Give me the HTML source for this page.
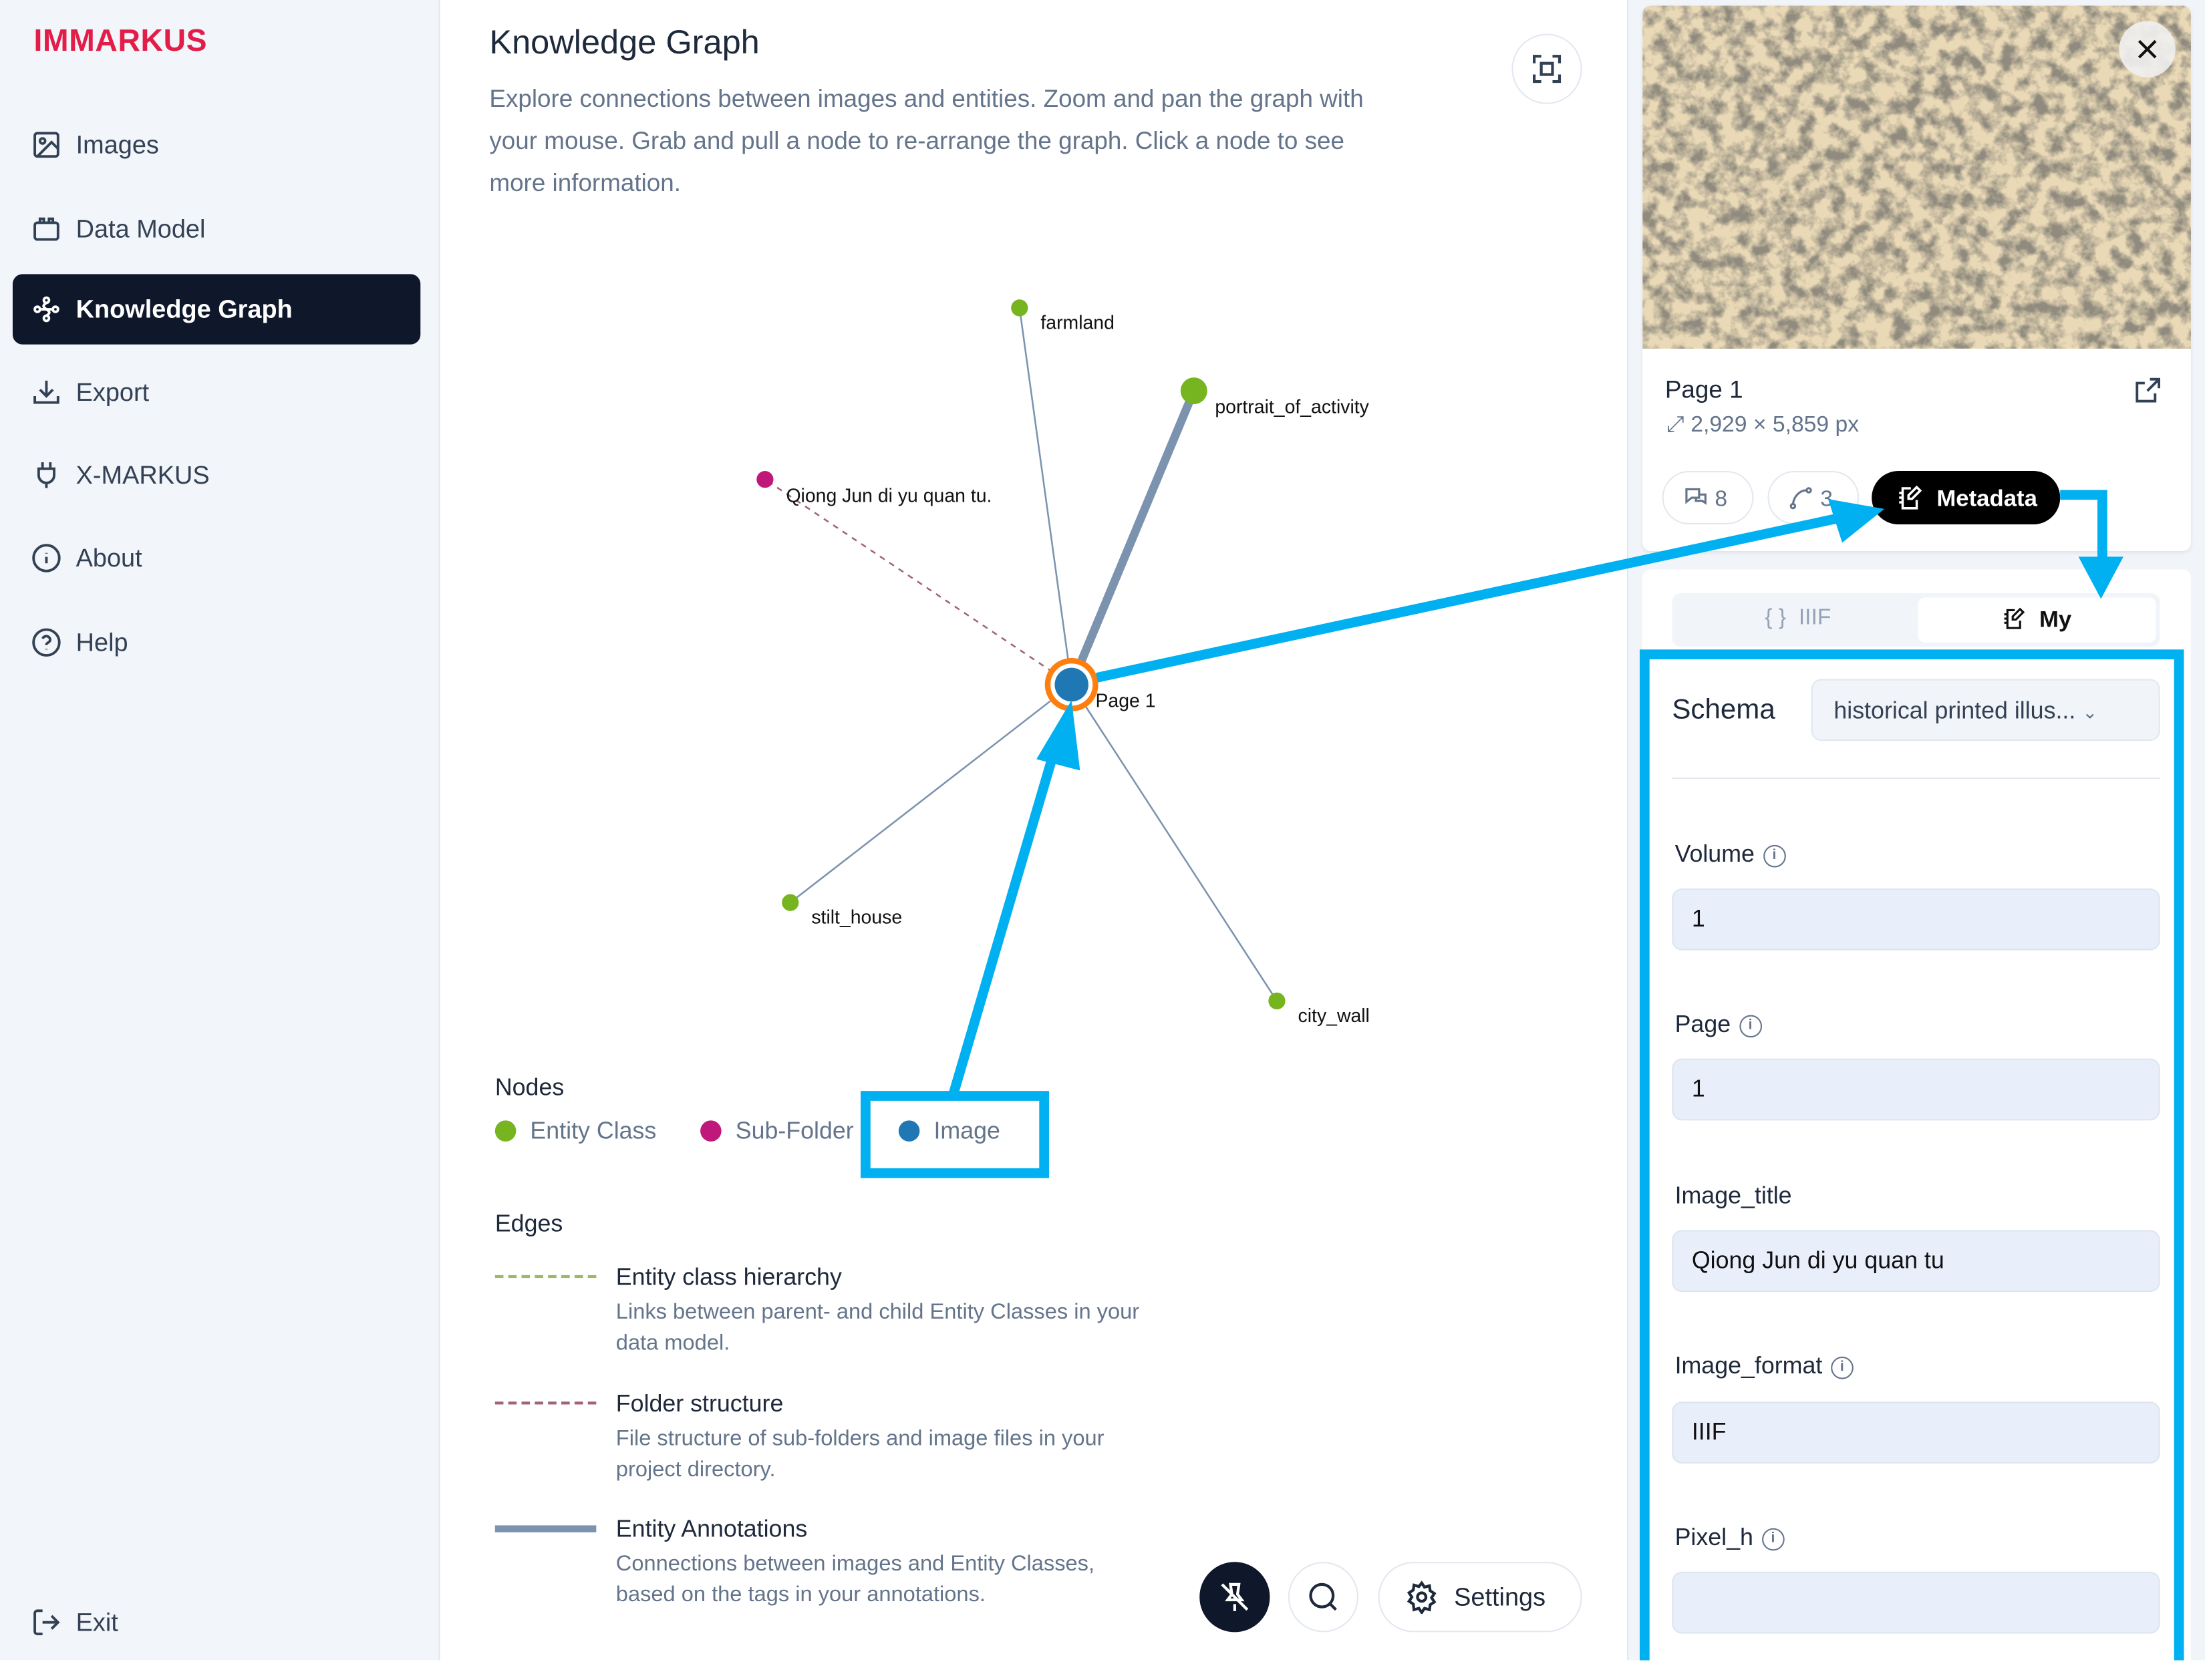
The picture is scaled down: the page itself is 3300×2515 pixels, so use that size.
<!DOCTYPE html>
<html><head><meta charset="utf-8">
<style>
html,body{margin:0;padding:0;width:3300px;height:2486px;overflow:hidden;background:#fff;}
#w{position:absolute;left:0;top:0;width:1568px;height:1181px;transform:scale(2.10459);transform-origin:0 0;font-family:"Liberation Sans",sans-serif;}
.a{position:absolute;}
.nav{position:absolute;left:22px;font-size:18px;color:#334155;display:flex;align-items:center;gap:10px;}
.nav svg{width:22px;height:22px;}
.lbl{position:absolute;font-size:17px;color:#1e293b;}
.inp{position:absolute;left:1189px;width:347px;height:44px;background:#e8effb;border:1px solid #dde5f0;border-radius:7px;box-sizing:border-box;font-size:17px;color:#111;padding:11px 13px;}
.info{display:inline-block;width:14px;height:14px;border:1.4px solid #64748b;border-radius:50%;font-size:10px;line-height:14px;text-align:center;color:#64748b;vertical-align:middle;margin-left:6px;font-weight:bold;box-sizing:content-box}
</style></head><body>
<div id="w">
<!-- sidebar -->
<div class="a" style="left:0;top:0;width:312px;height:1181px;background:#f2f5f9;border-right:1px solid #e2e8f0;"></div>
<div class="a" style="left:24px;top:16px;font-size:22px;font-weight:bold;color:#e11d48;letter-spacing:0.3px">IMMARKUS</div>
<div class="nav" style="top:92px"><svg viewBox="0 0 24 24" fill="none" stroke="#334155" stroke-width="2"><rect x="3" y="3" width="18" height="18" rx="2"/><circle cx="9" cy="9" r="2"/><path d="M21 15l-5-5L5 21"/></svg><span>Images</span></div>
<div class="nav" style="top:152px"><svg viewBox="0 0 24 24" fill="none" stroke="#334155" stroke-width="2"><rect x="3" y="7" width="18" height="13" rx="2"/><path d="M7 7V4h3v3M14 7V4h3v3"/></svg><span>Data Model</span></div>
<div class="a" style="left:9px;top:195px;width:290px;height:50px;background:#0f172a;border-radius:7px"></div>
<div class="nav" style="top:209px;color:#fff;font-weight:bold"><svg viewBox="0 0 24 24" fill="none" stroke="#fff" stroke-width="2"><circle cx="12" cy="5" r="2"/><circle cx="5" cy="12" r="2"/><circle cx="19" cy="12" r="2"/><circle cx="12" cy="19" r="2"/><path d="M7 12h10M12 7c-3 2-3 3 0 5M12 12c3 2 3 3 0 5"/></svg><span>Knowledge Graph</span></div>
<div class="nav" style="top:268px"><svg viewBox="0 0 24 24" fill="none" stroke="#334155" stroke-width="2"><path d="M12 3v12M7 10l5 5 5-5M3 15v5h18v-5"/></svg><span>Export</span></div>
<div class="nav" style="top:327px"><svg viewBox="0 0 24 24" fill="none" stroke="#334155" stroke-width="2"><path d="M9 2v5M15 2v5M6 7h12v5a6 6 0 0 1-12 0zM12 18v4"/></svg><span>X-MARKUS</span></div>
<div class="nav" style="top:386px"><svg viewBox="0 0 24 24" fill="none" stroke="#334155" stroke-width="2"><circle cx="12" cy="12" r="10"/><path d="M12 16v-5M12 8v0.5"/></svg><span>About</span></div>
<div class="nav" style="top:446px"><svg viewBox="0 0 24 24" fill="none" stroke="#334155" stroke-width="2"><circle cx="12" cy="12" r="10"/><path d="M9.1 9a3 3 0 0 1 5.8 1c0 2-3 2-3 4M12 17v0.5"/></svg><span>Help</span></div>
<div class="nav" style="top:1143px"><svg viewBox="0 0 24 24" fill="none" stroke="#334155" stroke-width="2"><path d="M9 21H5a2 2 0 0 1-2-2V5a2 2 0 0 1 2-2h4M16 17l5-5-5-5M21 12H9"/></svg><span>Exit</span></div>

<!-- main -->
<div class="a" style="left:348px;top:17px;font-size:24px;color:#1e293b">Knowledge Graph</div>
<div class="a" style="left:348px;top:55px;width:645px;font-size:17.5px;line-height:30px;color:#64748b">Explore connections between images and entities. Zoom and pan the graph with your mouse. Grab and pull a node to re-arrange the graph. Click a node to see more information.</div>
<div class="a" style="left:1075px;top:24px;width:50px;height:50px;border:1px solid #e2e8f0;border-radius:50%;box-sizing:border-box"></div>
<svg class="a" style="left:1088px;top:37px" width="24" height="24" viewBox="0 0 24 24" fill="none" stroke="#334155" stroke-width="2"><path d="M3 8V3h5M16 3h5v5M21 16v5h-5M8 21H3v-5"/><rect x="8" y="8" width="8" height="8"/></svg>

<svg class="a" style="left:0;top:0" width="1568" height="1181" viewBox="0 0 1568 1181">
<g stroke="#7b93ae" fill="none">
<line x1="762" y1="487" x2="725" y2="219" stroke-width="1.2"/>
<line x1="762" y1="487" x2="849" y2="278" stroke-width="6"/>
<line x1="762" y1="487" x2="544" y2="341" stroke="#a06378" stroke-width="1.2" stroke-dasharray="4 4"/>
<line x1="762" y1="487" x2="562" y2="642" stroke-width="1.2"/>
<line x1="762" y1="487" x2="908" y2="712" stroke-width="1.2"/>
</g>
<circle cx="725" cy="219" r="6" fill="#76b420"/>
<circle cx="849" cy="278" r="9.5" fill="#76b420"/>
<circle cx="544" cy="341" r="6" fill="#c0187a"/>
<circle cx="562" cy="642" r="6" fill="#76b420"/>
<circle cx="908" cy="712" r="6" fill="#76b420"/>
<circle cx="762" cy="487" r="17" fill="#fff" stroke="#ff7f0e" stroke-width="4"/>
<circle cx="762" cy="487" r="12" fill="#1f77b4"/>
<g font-family="Liberation Sans" font-size="13.5" fill="#111">
<text x="740" y="234">farmland</text>
<text x="864" y="294">portrait_of_activity</text>
<text x="559" y="357">Qiong Jun di yu quan tu.</text>
<text x="779" y="503">Page 1</text>
<text x="577" y="657">stilt_house</text>
<text x="923" y="727">city_wall</text>
</g>
<g stroke="#00b0f0" fill="none" stroke-width="7">
<line x1="678" y1="778" x2="748" y2="540"/>
<rect x="615.5" y="779.5" width="127" height="55"/>
</g>
<polygon points="762,498 737,540 768,548" fill="#00b0f0"/>
</svg>

<!-- legend -->
<div class="a" style="left:352px;top:764px;font-size:17px;color:#1e293b">Nodes</div>
<div class="a" style="left:352px;top:797px;width:15px;height:15px;border-radius:50%;background:#76b420"></div>
<div class="a" style="left:377px;top:795px;font-size:17px;color:#64748b">Entity Class</div>
<div class="a" style="left:498px;top:797px;width:15px;height:15px;border-radius:50%;background:#c0187a"></div>
<div class="a" style="left:523px;top:795px;font-size:17px;color:#64748b">Sub-Folder</div>
<div class="a" style="left:639px;top:797px;width:15px;height:15px;border-radius:50%;background:#1f77b4"></div>
<div class="a" style="left:664px;top:795px;font-size:17px;color:#64748b">Image</div>
<div class="a" style="left:352px;top:861px;font-size:17px;color:#1e293b">Edges</div>
<div class="a" style="left:352px;top:907px;width:72px;border-top:2px dashed #9cb86a"></div>
<div class="a" style="left:438px;top:899px;font-size:17px;color:#1e293b">Entity class hierarchy</div>
<div class="a" style="left:438px;top:923px;width:385px;font-size:15.5px;line-height:22px;color:#64748b">Links between parent- and child Entity Classes in your data model.</div>
<div class="a" style="left:352px;top:997px;width:72px;border-top:2px dashed #a06378"></div>
<div class="a" style="left:438px;top:989px;font-size:17px;color:#1e293b">Folder structure</div>
<div class="a" style="left:438px;top:1013px;width:370px;font-size:15.5px;line-height:22px;color:#64748b">File structure of sub-folders and image files in your project directory.</div>
<div class="a" style="left:352px;top:1085px;width:72px;height:5px;background:#7b93ae"></div>
<div class="a" style="left:438px;top:1078px;font-size:17px;color:#1e293b">Entity Annotations</div>
<div class="a" style="left:438px;top:1102px;width:385px;font-size:15.5px;line-height:22px;color:#64748b">Connections between images and Entity Classes, based on the tags in your annotations.</div>

<!-- bottom buttons -->
<div class="a" style="left:853px;top:1111px;width:50px;height:50px;border-radius:50%;background:#0f172a"></div>
<svg class="a" style="left:866px;top:1124px" width="24" height="24" viewBox="0 0 24 24" fill="none" stroke="#fff" stroke-width="2"><path d="M12 17v5M9 3h6l-1 7 3 4H7l3-4zM3 3l18 18"/></svg>
<div class="a" style="left:916px;top:1111px;width:50px;height:50px;border-radius:50%;border:1px solid #e2e8f0;box-sizing:border-box"></div>
<svg class="a" style="left:929px;top:1124px" width="24" height="24" viewBox="0 0 24 24" fill="none" stroke="#1e293b" stroke-width="2"><circle cx="11" cy="11" r="8"/><path d="M21 21l-4.3-4.3"/></svg>
<div class="a" style="left:980px;top:1111px;width:145px;height:50px;border-radius:25px;border:1px solid #e2e8f0;box-sizing:border-box"></div>
<svg class="a" style="left:999px;top:1124px" width="24" height="24" viewBox="0 0 24 24" fill="none" stroke="#1e293b" stroke-width="2"><circle cx="12" cy="12" r="3"/><path d="M12 2l2 3 3.5-1 .5 3.5 3 2-2 3 2 3-3 2-.5 3.5-3.5-1-2 3-2-3-3.5 1L6 17l-3-2 2-3-2-3 3-2 .5-3.5 3.5 1z"/></svg>
<div class="a" style="left:1034px;top:1126px;font-size:18px;color:#1e293b">Settings</div>

<!-- right panel -->
<div class="a" style="left:1157px;top:0;width:411px;height:1181px;background:#f1f5f9;border-left:1px solid #e2e8f0"></div>
<div class="a" style="left:1168px;top:4px;width:390px;height:388px;background:#fff;border-radius:6px;box-shadow:0 1px 3px rgba(0,0,0,.08);overflow:hidden">
<svg width="390" height="244" style="display:block">
<filter id="t"><feTurbulence type="fractalNoise" baseFrequency="0.09" numOctaves="4" seed="7"/><feColorMatrix type="matrix" values="0 0 0 0 0.28  0 0 0 0 0.26  0 0 0 0 0.21  -3 0 0 0 1.85"/></filter>
<rect width="390" height="244" fill="#ead9b6"/>
<rect width="390" height="244" filter="url(#t)"/>
</svg>
</div>
<div class="a" style="left:1507px;top:15px;width:40px;height:40px;border-radius:50%;background:rgba(240,240,240,.9)"></div>
<svg class="a" style="left:1517px;top:25px" width="20" height="20" viewBox="0 0 24 24" stroke="#111" stroke-width="2.4"><path d="M5 5l14 14M19 5L5 19"/></svg>
<div class="a" style="left:1184px;top:267px;font-size:17.5px;color:#1e293b">Page 1</div>
<svg class="a" style="left:1516px;top:267px" width="22" height="22" viewBox="0 0 24 24" fill="none" stroke="#334155" stroke-width="2"><path d="M14 3h7v7M21 3l-9 9M18 14v6H4V6h6"/></svg>
<div class="a" style="left:1185px;top:294px;font-size:16px;color:#64748b">⤢ 2,929 × 5,859 px</div>
<div class="a" style="left:1182px;top:335px;width:65px;height:38px;border:1px solid #e2e8f0;border-radius:19px;box-sizing:border-box;font-size:16px;color:#64748b;padding:9px 0 0 14px">
<svg width="18" height="18" viewBox="0 0 24 24" fill="none" stroke="#64748b" stroke-width="2" style="vertical-align:-3px"><path d="M3 4h12v8H8l-5 4zM15 9h6v8l-3-2h-6v-3"/></svg> 8</div>
<div class="a" style="left:1257px;top:335px;width:65px;height:38px;border:1px solid #e2e8f0;border-radius:19px;box-sizing:border-box;font-size:16px;color:#64748b;padding:9px 0 0 14px">
<svg width="18" height="18" viewBox="0 0 24 24" fill="none" stroke="#64748b" stroke-width="2" style="vertical-align:-3px"><circle cx="4" cy="20" r="2"/><circle cx="19" cy="5" r="2"/><path d="M4 18C5 10 11 5 17 5"/></svg> 3</div>
<div class="a" style="left:1331px;top:335px;width:134px;height:38px;background:#000;border-radius:19px;color:#fff;font-size:16.5px;box-sizing:border-box;padding:9px 0 0 17px;font-weight:bold">
<svg width="20" height="20" viewBox="0 0 24 24" fill="none" stroke="#fff" stroke-width="2" style="vertical-align:-4px"><path d="M13 4H6v17h12v-7M3 8h4M3 12h4M3 16h4M18 3l3 3-7 7h-3v-3z"/></svg>&nbsp; Metadata</div>

<div class="a" style="left:1168px;top:405px;width:390px;height:790px;background:#fff;border-radius:6px"></div>
<div class="a" style="left:1189px;top:422px;width:347px;height:38px;background:#f1f5f9;border-radius:6px"></div>
<div class="a" style="left:1364px;top:425px;width:169px;height:32px;background:#fff;border-radius:5px"></div>
<div class="a" style="left:1255px;top:431px;font-size:16px;color:#94a3b8">{ }&nbsp; IIIF</div>
<div class="a" style="left:1423px;top:431px;font-size:16.5px;color:#111;font-weight:bold"><svg width="18" height="18" viewBox="0 0 24 24" fill="none" stroke="#111" stroke-width="2" style="vertical-align:-3px"><path d="M13 4H6v17h12v-7M3 8h4M3 12h4M3 16h4M18 3l3 3-7 7h-3v-3z"/></svg>&nbsp; My</div>

<div class="a" style="left:1189px;top:494px;font-size:20px;color:#1e293b">Schema</div>
<div class="a" style="left:1288px;top:483px;width:248px;height:44px;background:#f1f5f9;border:1px solid #e2e8f0;border-radius:7px;box-sizing:border-box;font-size:17px;color:#334155;padding:12px 15px">historical printed illus... <span style="color:#64748b;font-size:13px">&#8964;</span></div>
<div class="a" style="left:1189px;top:553px;width:347px;height:1px;background:#e2e8f0"></div>

<div class="lbl" style="left:1191px;top:598px">Volume<span class="info">i</span></div>
<div class="inp" style="top:632px">1</div>
<div class="lbl" style="left:1191px;top:719px">Page<span class="info">i</span></div>
<div class="inp" style="top:753px">1</div>
<div class="lbl" style="left:1191px;top:841px">Image_title</div>
<div class="inp" style="top:875px">Qiong Jun di yu quan tu</div>
<div class="lbl" style="left:1191px;top:962px">Image_format<span class="info">i</span></div>
<div class="inp" style="top:997px">IIIF</div>
<div class="lbl" style="left:1191px;top:1084px">Pixel_h<span class="info">i</span></div>
<div class="inp" style="top:1118px"></div>

<svg class="a" style="left:0;top:0" width="1568" height="1181"><g stroke="#00b0f0" fill="none" stroke-width="7"><rect x="1169.5" y="465.5" width="380" height="720"/><polyline points="1465,352 1495,352 1495,400"/><line x1="780" y1="482" x2="1310" y2="368"/></g><polygon points="1478,396 1510,396 1494,426" fill="#00b0f0"/><polygon points="1340,362 1300,355 1310,386" fill="#00b0f0"/></svg>
</div>
</body></html>
